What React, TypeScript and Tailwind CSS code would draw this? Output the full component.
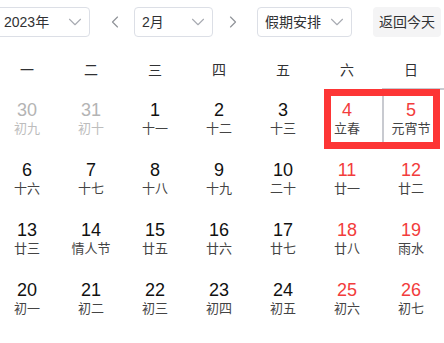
import React from "react";
import { ChevronDown, ChevronLeft, ChevronRight } from "lucide-react";

type Day = { n: number; lunar: string; muted?: boolean; red?: boolean };

const weekdays = ["一", "二", "三", "四", "五", "六", "日"];

const rows: Day[][] = [
  [
    { n: 30, lunar: "初九", muted: true },
    { n: 31, lunar: "初十", muted: true },
    { n: 1, lunar: "十一" },
    { n: 2, lunar: "十二" },
    { n: 3, lunar: "十三" },
    { n: 4, lunar: "立春", red: true },
    { n: 5, lunar: "元宵节", red: true },
  ],
  [
    { n: 6, lunar: "十六" },
    { n: 7, lunar: "十七" },
    { n: 8, lunar: "十八" },
    { n: 9, lunar: "十九" },
    { n: 10, lunar: "二十" },
    { n: 11, lunar: "廿一", red: true },
    { n: 12, lunar: "廿二", red: true },
  ],
  [
    { n: 13, lunar: "廿三" },
    { n: 14, lunar: "情人节" },
    { n: 15, lunar: "廿五" },
    { n: 16, lunar: "廿六" },
    { n: 17, lunar: "廿七" },
    { n: 18, lunar: "廿八", red: true },
    { n: 19, lunar: "雨水", red: true },
  ],
  [
    { n: 20, lunar: "初一" },
    { n: 21, lunar: "初二" },
    { n: 22, lunar: "初三" },
    { n: 23, lunar: "初四" },
    { n: 24, lunar: "初五" },
    { n: 25, lunar: "初六", red: true },
    { n: 26, lunar: "初七", red: true },
  ],
];

function Select({ label, className }: { label: string; className: string }) {
  return (
    <div
      className={`h-[30px] flex items-center justify-between border border-[#dcdfe6] rounded-[4px] bg-white text-[14px] text-[#303133] ${className}`}
    >
      <span>{label}</span>
      <ChevronDown size={22} strokeWidth={1.2} className="text-[#a8abb2]" />
    </div>
  );
}

export default function App() {
  return (
    <div
      className="relative w-[444px] h-[343px] overflow-hidden bg-white"
      style={{ fontFamily: '"Liberation Sans", "Noto Sans CJK SC", sans-serif' }}
    >
      {/* Toolbar */}
      <div className="flex items-center pt-[7px]">
        <Select label="2023年" className="w-[96px] -ml-[6px] pl-[9px] pr-[3px]" />
        <button className="ml-[13px] w-[24px] flex justify-center text-[#909399]">
          <ChevronLeft size={20} strokeWidth={1.4} />
        </button>
        <Select label="2月" className="ml-[7px] w-[79px] pl-[7px] pr-[3px]" />
        <button className="ml-[8px] w-[24px] flex justify-center text-[#909399]">
          <ChevronRight size={20} strokeWidth={1.4} />
        </button>
        <Select label="假期安排" className="ml-[12px] w-[95px] pl-[7px] pr-[3px]" />
        <button className="ml-[21px] w-[68px] h-[30px] rounded-[4px] bg-[#f4f4f5] text-[14px] text-[#303133]">
          返回今天
        </button>
      </div>

      {/* Weekdays */}
      <div className="-ml-[5px] w-[448px] grid grid-cols-7 mt-[13px] h-[40px] items-center text-center text-[14px] text-[#303133]">
        {weekdays.map((w) => (
          <span key={w}>{w}</span>
        ))}
      </div>

      {/* Days */}
      <div className="-ml-[5px] w-[448px]">
        {rows.map((row, ri) => (
          <div key={ri} className="relative grid grid-cols-7 h-[60px]">
            {ri === 0 && (
              <div className="absolute left-[387px] -top-[2px] w-[62px] h-[61px] border-l-2 border-t-2 border-[#c8cad0]" />
            )}
            {row.map((d) => (
              <div key={`${ri}-${d.n}`} className="flex flex-col items-center pt-[10px]">
                <span
                  className={`text-[18px] leading-[20px] ${
                    d.muted ? "text-[#b4b4b4]" : d.red ? "text-[#f23c3c]" : "text-[#111]"
                  }`}
                >
                  {d.n}
                </span>
                <span
                  className={`mt-[1px] text-[13px] leading-[16px] ${
                    d.muted ? "text-[#bdbdbd]" : "text-[#444]"
                  }`}
                >
                  {d.lunar}
                </span>
              </div>
            ))}
          </div>
        ))}
      </div>

      {/* Annotation box */}
      <div className="absolute left-[324px] top-[89px] w-[116px] h-[60px] border-[7px] border-[#fd3535]" />
    </div>
  );
}
